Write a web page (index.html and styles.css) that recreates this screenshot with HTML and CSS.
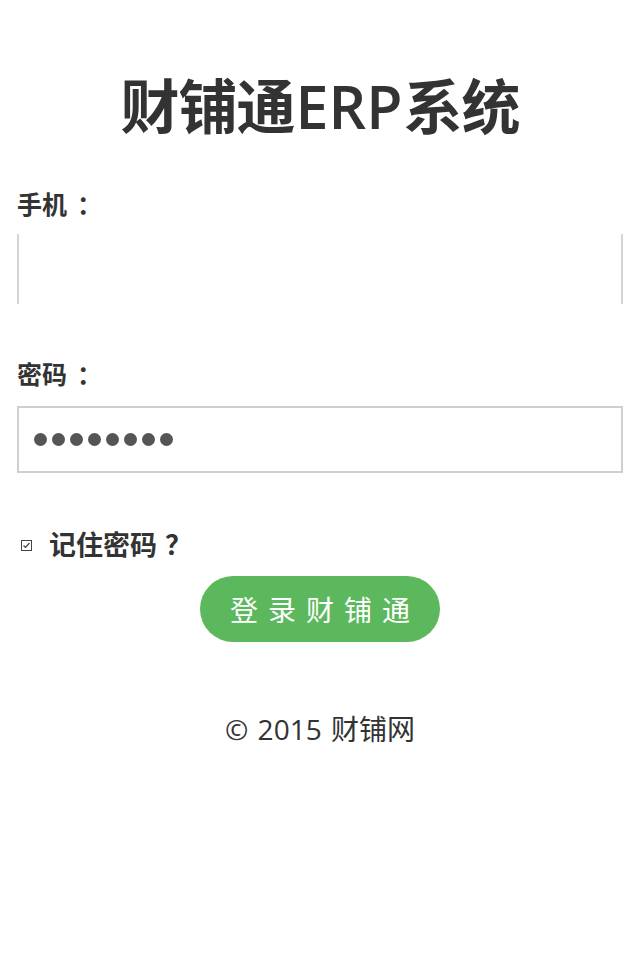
FILE: index.html
```html
<!DOCTYPE html>
<html lang="zh-CN">
<head>
<meta charset="utf-8">
<title>财铺通ERP系统</title>
<link rel="stylesheet" href="styles.css">
</head>
<body>
<div class="page">
  <h1 class="title">财铺通<span class="latin">ERP</span>系统</h1>
  <form class="form">
    <label class="label">手机<span class="colon">：</span></label>
    <div class="input input-phone"></div>
    <label class="label label-pwd">密码<span class="colon">：</span></label>
    <div class="input input-pwd">
      <span class="dot"></span><span class="dot"></span><span class="dot"></span><span class="dot"></span><span class="dot"></span><span class="dot"></span><span class="dot"></span><span class="dot"></span>
    </div>
    <div class="remember">
      <svg class="check" width="11" height="11" viewBox="0 0 11 11"><rect x="0.5" y="0.5" width="10" height="10" fill="#fff" stroke="#444" stroke-width="1"/><path d="M2.5 5.5 L4.5 7.5 L8.5 3" fill="none" stroke="#444" stroke-width="1.2"/></svg>
      <span class="remember-text">记住密码<span class="qmark">？</span></span>
    </div>
    <div class="actions">
      <button type="button" class="btn">登录财铺通</button>
    </div>
  </form>
  <p class="footer">© 2015 财铺网</p>
</div>
</body>
</html>
```

FILE: styles.css
```css
html, body {
  margin: 0;
  padding: 0;
  background: #fff;
}
body {
  font-family: "Open Sans", "Noto Sans CJK SC", sans-serif;
  color: #333;
}
.page {
  padding: 0 17px;
}
.title {
  margin: 0;
  padding-top: 66px;
  font-size: 59px;
  line-height: 80px;
  font-weight: 700;
  text-align: center;
  color: #333;
  letter-spacing: -1px;
}
.title .latin {
  font-family: "Open Sans", sans-serif;
  font-weight: 600;
  letter-spacing: 0;
  margin: 0 1px;
}
.form {
  display: flex;
  flex-direction: column;
}
.label {
  display: block;
  margin-top: 40px;
  font-size: 25px;
  line-height: 36px;
  font-weight: 700;
  color: #333;
}
.colon {
  margin-left: 10px;
}
.label-pwd {
  margin-top: 52px;
}
.input {
  box-sizing: border-box;
  height: 70px;
  margin-top: 12px;
  background: #fff;
}
.input-phone {
  border-left: 2px solid #d4d4d4;
  border-right: 2px solid #d4d4d4;
}
.input-pwd {
  height: 67px;
  margin-top: 14px;
  border: 2px solid #cfcfcf;
  display: flex;
  align-items: center;
  gap: 5px;
  padding-left: 15px;
}
.dot {
  width: 13px;
  height: 13px;
  border-radius: 50%;
  background: #555;
}
.remember {
  display: flex;
  align-items: center;
  margin-top: 52px;
  padding-left: 4px;
  height: 40px;
}
.check {
  display: block;
  margin-right: 17px;
}
.remember-text {
  font-size: 27px;
  font-weight: 700;
  color: #333;
  line-height: 40px;
}
.qmark {
  margin-left: 8px;
}
.actions {
  display: flex;
  justify-content: center;
  margin-top: 11px;
}
.btn {
  width: 240px;
  height: 66px;
  border: none;
  border-radius: 33px;
  background: #5cb85c;
  color: #fff;
  font-family: "Noto Sans CJK SC", sans-serif;
  font-size: 28px;
  font-weight: 400;
  letter-spacing: 10px;
  padding: 0 0 0 10px;
}
.footer {
  margin: 69px 0 0;
  text-align: center;
  font-size: 28px;
  line-height: 36px;
  color: #333;
  word-spacing: 2px;
}
```
